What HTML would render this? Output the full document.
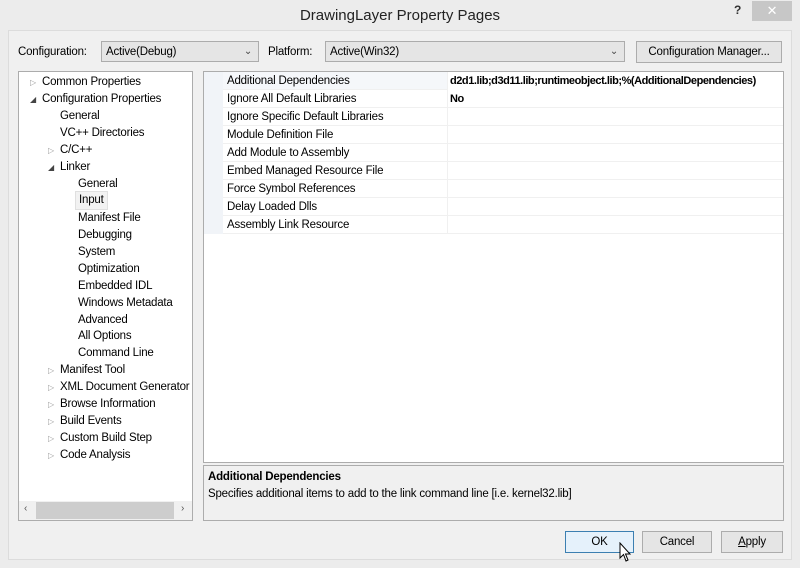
<!DOCTYPE html>
<html><head><style>
*{margin:0;padding:0;box-sizing:border-box}
body{width:800px;height:568px;background:#ececec;font-family:"Liberation Sans",sans-serif;font-size:11.5px;color:#000;position:relative;overflow:hidden;letter-spacing:-0.2px}
.abs{position:absolute;white-space:nowrap}
.client{left:8px;top:30px;width:784px;height:530px;background:#f0f0f0;border:1px solid #dcdcdc}
.title{left:0;top:7px;width:800px;text-align:center;font-size:15px;color:#222;letter-spacing:0}
.close{left:752px;top:1px;width:40px;height:20px;background:#c7c7c7;color:#fff;text-align:center;font-size:13px;line-height:20px}
.help{left:734px;top:3px;font-weight:bold;font-size:12px;color:#333}
.combo{height:21px;border:1px solid #acacac;background:#e5e5e5;line-height:20px;padding-left:4px}
.combo .arr{position:absolute;right:6px;top:0;color:#444;font-size:10px}
.btn{height:22px;border:1px solid #acacac;background:#e5e5e5;text-align:center;line-height:21px}
.tree{left:18px;top:71px;width:175px;height:450px;background:#fff;border:1px solid #acacac}
.ti{position:absolute;white-space:nowrap;line-height:19px}
.tri{position:absolute;font-size:8px;color:#999}
.grid{left:203px;top:71px;width:581px;height:392px;background:#fff;border:1px solid #acacac}
.gut{position:absolute;left:0;top:0;width:19px;height:162px;background:#f1f4f8}
.row{position:absolute;left:19px;width:560px;height:18px;border-bottom:1px solid #f0f0f0;line-height:19px;white-space:nowrap}
.row .n{position:absolute;left:4px}
.row .v{position:absolute;left:224px;font-weight:bold;border-left:1px solid #f0f0f0;padding-left:2px;height:18px;width:336px;font-size:11px;letter-spacing:-0.45px}
.desc{left:203px;top:465px;width:581px;height:56px;background:#f0f0f0;border:1px solid #acacac}
u{text-decoration:underline}
</style></head><body>
<div class="abs title">DrawingLayer Property Pages</div>
<div class="abs help">?</div>
<div class="abs close">✕</div>
<div class="abs client"></div>

<div class="abs" style="left:18px;top:46px">Configuration:</div>
<div class="abs combo" style="left:101px;top:41px;width:158px">Active(Debug)<span class="arr">&#8964;</span></div>
<div class="abs" style="left:268px;top:46px">Platform:</div>
<div class="abs combo" style="left:325px;top:41px;width:300px">Active(Win32)<span class="arr">&#8964;</span></div>
<div class="abs btn" style="left:636px;top:41px;width:146px">Configuration Manager...</div>

<div class="abs tree">
<span class="tri" style="left:11px;top:6px">▷</span><div class="ti" style="left:23px;top:1px">Common Properties</div>
<span class="tri" style="left:11px;top:23px;color:#444">◢</span><div class="ti" style="left:23px;top:18px">Configuration Properties</div>
<div class="ti" style="left:41px;top:35px">General</div>
<div class="ti" style="left:41px;top:52px">VC++ Directories</div>
<span class="tri" style="left:29px;top:74px">▷</span><div class="ti" style="left:41px;top:69px">C/C++</div>
<span class="tri" style="left:29px;top:91px;color:#444">◢</span><div class="ti" style="left:41px;top:86px">Linker</div>
<div class="ti" style="left:59px;top:103px">General</div>
<div class="ti" style="left:56px;top:119px;padding:0 3px;background:#f2f2f2;border:1px solid #e0e0e0;line-height:17px">Input</div>
<div class="ti" style="left:59px;top:137px">Manifest File</div>
<div class="ti" style="left:59px;top:154px">Debugging</div>
<div class="ti" style="left:59px;top:171px">System</div>
<div class="ti" style="left:59px;top:188px">Optimization</div>
<div class="ti" style="left:59px;top:205px">Embedded IDL</div>
<div class="ti" style="left:59px;top:222px">Windows Metadata</div>
<div class="ti" style="left:59px;top:239px">Advanced</div>
<div class="ti" style="left:59px;top:255px">All Options</div>
<div class="ti" style="left:59px;top:272px">Command Line</div>
<span class="tri" style="left:29px;top:294px">▷</span><div class="ti" style="left:41px;top:289px">Manifest Tool</div>
<span class="tri" style="left:29px;top:311px">▷</span><div class="ti" style="left:41px;top:306px">XML Document Generator</div>
<span class="tri" style="left:29px;top:328px">▷</span><div class="ti" style="left:41px;top:323px">Browse Information</div>
<span class="tri" style="left:29px;top:345px">▷</span><div class="ti" style="left:41px;top:340px">Build Events</div>
<span class="tri" style="left:29px;top:362px">▷</span><div class="ti" style="left:41px;top:357px">Custom Build Step</div>
<span class="tri" style="left:29px;top:379px">▷</span><div class="ti" style="left:41px;top:374px">Code Analysis</div>
<div style="position:absolute;left:0;top:429px;width:173px;height:19px;background:#f0f0f0"></div>
<div style="position:absolute;left:5px;top:431px;font-size:10px;color:#555">&#8249;</div>
<div style="position:absolute;left:17px;top:430px;width:138px;height:17px;background:#cdcdcd"></div>
<div style="position:absolute;left:162px;top:431px;font-size:10px;color:#555">&#8250;</div>
</div>

<div class="abs grid">
<div class="gut"></div>
<div class="row" style="top:0;background:#f5f7fa"><span class="n">Additional Dependencies</span><span class="v" style="background:#fff">d2d1.lib;d3d11.lib;runtimeobject.lib;%(AdditionalDependencies)</span></div>
<div class="row" style="top:18px"><span class="n">Ignore All Default Libraries</span><span class="v">No</span></div>
<div class="row" style="top:36px"><span class="n">Ignore Specific Default Libraries</span><span class="v"></span></div>
<div class="row" style="top:54px"><span class="n">Module Definition File</span><span class="v"></span></div>
<div class="row" style="top:72px"><span class="n">Add Module to Assembly</span><span class="v"></span></div>
<div class="row" style="top:90px"><span class="n">Embed Managed Resource File</span><span class="v"></span></div>
<div class="row" style="top:108px"><span class="n">Force Symbol References</span><span class="v"></span></div>
<div class="row" style="top:126px"><span class="n">Delay Loaded Dlls</span><span class="v"></span></div>
<div class="row" style="top:144px"><span class="n">Assembly Link Resource</span><span class="v"></span></div>
</div>

<div class="abs desc">
<div style="position:absolute;left:4px;top:5px;font-weight:bold">Additional Dependencies</div>
<div style="position:absolute;left:4px;top:22px">Specifies additional items to add to the link command line [i.e. kernel32.lib]</div>
</div>

<div class="abs btn" style="left:565px;top:531px;width:69px;background:#e5f1fb;border-color:#3c7fb1">OK</div>
<div class="abs btn" style="left:642px;top:531px;width:70px">Cancel</div>
<div class="abs btn" style="left:721px;top:531px;width:62px"><u>A</u>pply</div>
<svg class="abs" style="left:619px;top:542px" width="14" height="22" viewBox="0 0 14 22"><path d="M1 1 L1 16 L4.5 12.5 L7 19 L9 18 L6.5 12 L11 12 Z" fill="#fff" stroke="#000" stroke-width="1"/></svg>
</body></html>
